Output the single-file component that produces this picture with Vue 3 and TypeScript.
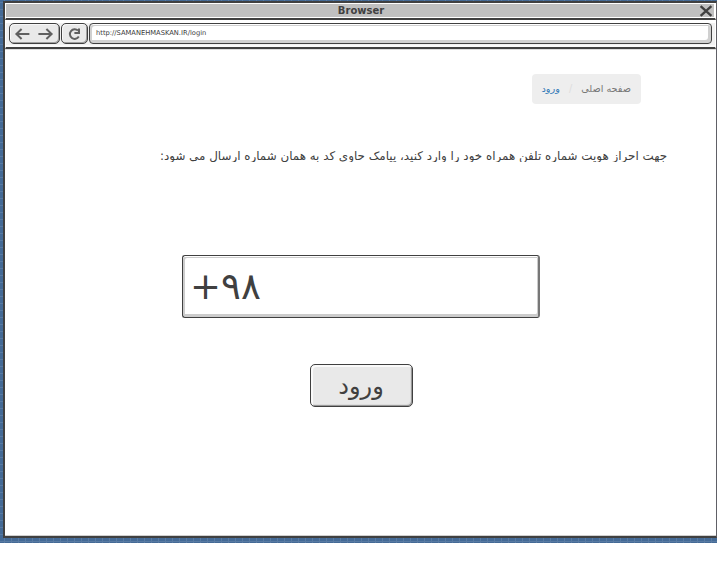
<script setup lang="ts">
import { ref } from 'vue'

const title = 'Browser'
const url = ref('http://SAMANEHMASKAN.IR/login')
const phone = ref('+۹۸')
const message = 'جهت احراز هویت شماره تلفن همراه خود را وارد کنید، پیامک حاوی کد به همان شماره ارسال می شود:'
</script>

<template>
  <div class="canvas">
    <div class="window">
      <header class="titlebar">
        <span class="title">{{ title }}</span>
        <svg class="close" width="14" height="12" viewBox="0 0 14 12">
          <path d="M1.6 1.2 12.4 10.8M12.4 1.2 1.6 10.8" />
        </svg>
      </header>
      <nav class="toolbar">
        <div class="control arrows">
          <svg width="46" height="18" viewBox="0 0 46 18">
            <path d="M18.4 9H5.4M10.6 4 5.4 9l5.2 5M27.4 9h13M35.4 4 40.6 9l-5.2 5" />
          </svg>
        </div>
        <div class="control reload">
          <svg width="22" height="18" viewBox="0 0 22 18">
            <path d="M14 5.6A4.8 4.8 0 1 0 14.8 11.6M15 3.6V7.9H10.4" />
          </svg>
        </div>
        <div class="address">{{ url }}</div>
      </nav>
      <main class="page">
        <div class="breadcrumb" dir="rtl">
          <span>صفحه اصلی</span>
          <span class="slash">/</span>
          <a>ورود</a>
        </div>
        <p class="message" dir="rtl">{{ message }}</p>
        <div class="phone">{{ phone }}</div>
        <button class="submit" type="button">ورود</button>
      </main>
    </div>
  </div>
</template>

<style>
body {
  background: #fff;
}
</style>

<style scoped>
* {
  box-sizing: border-box;
}
.canvas {
  width: 717px;
  height: 543px;
  padding: 1px 0 5px 3px;
  font-family: "DejaVu Sans", sans-serif;
  color: #404040;
  background-color: #446a96;
  background-image:
    linear-gradient(to right, #587aa2 1px, transparent 1px),
    linear-gradient(to bottom, #587aa2 1px, transparent 1px);
  background-size: 7px 7px;
  background-position: 4px 2px;
}
.window {
  display: flex;
  flex-direction: column;
  width: 714px;
  height: 537px;
  border: 2px solid #404040;
  border-right: 1px solid #606066;
  background: #fff;
}
.titlebar {
  display: flex;
  align-items: center;
  flex: none;
  height: 17px;
  padding-right: 2px;
  border: 1px solid #fff;
  border-bottom: 2px solid #404040;
  background: #c0c0c0;
  box-shadow: inset 0 -1px #fff, inset -1px 0 #fff;
}
.title {
  flex: 1;
  padding-left: 17px;
  font-size: 10px;
  line-height: 14px;
  font-weight: bold;
  text-align: center;
}
.close {
  flex: none;
}
svg path {
  fill: none;
  stroke: #404040;
  stroke-width: 2.3;
}
.toolbar {
  display: flex;
  flex: none;
  height: 29px;
  padding: 2px 3px 3px;
  gap: 1px;
  border: 1px solid #fff;
  border-bottom: 2px solid #404040;
  background: #f1f1f1;
  box-shadow: inset 0 2px #fff, inset 0 -2px #fafafa;
}
.control {
  display: flex;
  align-items: center;
  justify-content: center;
  flex: none;
  height: 21px;
  border: 1px solid #404040;
  border-radius: 5px;
  background: #e9e9e9;
  box-shadow: inset 1px 1px #f8f8f8, inset -1px -1px #a0a0a0;
}
.control path {
  stroke: #606060;
  stroke-width: 2;
}
.arrows {
  width: 51px;
}
.arrows svg {
  margin-left: -1px;
}
.reload {
  width: 27px;
}
.address {
  flex: 1;
  height: 21px;
  padding: 0 6px;
  border: 1px solid #404040;
  border-radius: 4px;
  background: #fff;
  box-shadow: inset 0 1px #fff, inset 2px 2px #d0d0d0, inset -3px -3px #d0d0d0;
  font-size: 6.72px;
  line-height: 19px;
}
.page {
  display: flex;
  flex-direction: column;
  flex: 1;
  border-top: 1px solid #ddd;
  border-bottom: 1px solid #d0d0d0;
}
.breadcrumb {
  display: flex;
  align-items: center;
  align-self: flex-end;
  width: 109px;
  height: 30px;
  margin: 24px 75px 0 0;
  padding: 0 10px 2px;
  border-radius: 4px;
  background: #eee;
  color: #777;
  font-size: 9.7px;
  white-space: nowrap;
}
.slash {
  margin: 0 9px;
  color: #ddd;
}
.breadcrumb a {
  color: #337ab7;
}
.message {
  align-self: flex-end;
  height: 15px;
  margin: 43px 49px 0 0;
  overflow: hidden;
  font-size: 11.9px;
  line-height: 19px;
  white-space: nowrap;
}
.phone {
  width: 358px;
  height: 63px;
  margin: 93px 0 0 177px;
  padding-left: 7px;
  border: 1px solid #404040;
  border-right: 2px solid #777;
  border-radius: 3px;
  box-shadow: inset 0 1px #fff, inset 2px 2px #ccc, inset -1px -3px #ccc;
  font-size: 37px;
  line-height: 62px;
}
.submit {
  width: 103px;
  height: 43px;
  margin: 46px 0 0 305px;
  padding: 1px 1px 0 0;
  border: 1px solid #404040;
  border-radius: 5px;
  background: #e9e9e9;
  box-shadow: inset 2px 2px #fafafa, inset -1px -1px #999, inset -2px -2px #ddd;
  color: #404040;
  font-family: inherit;
  font-size: 24px;
  line-height: 40px;
}
</style>
